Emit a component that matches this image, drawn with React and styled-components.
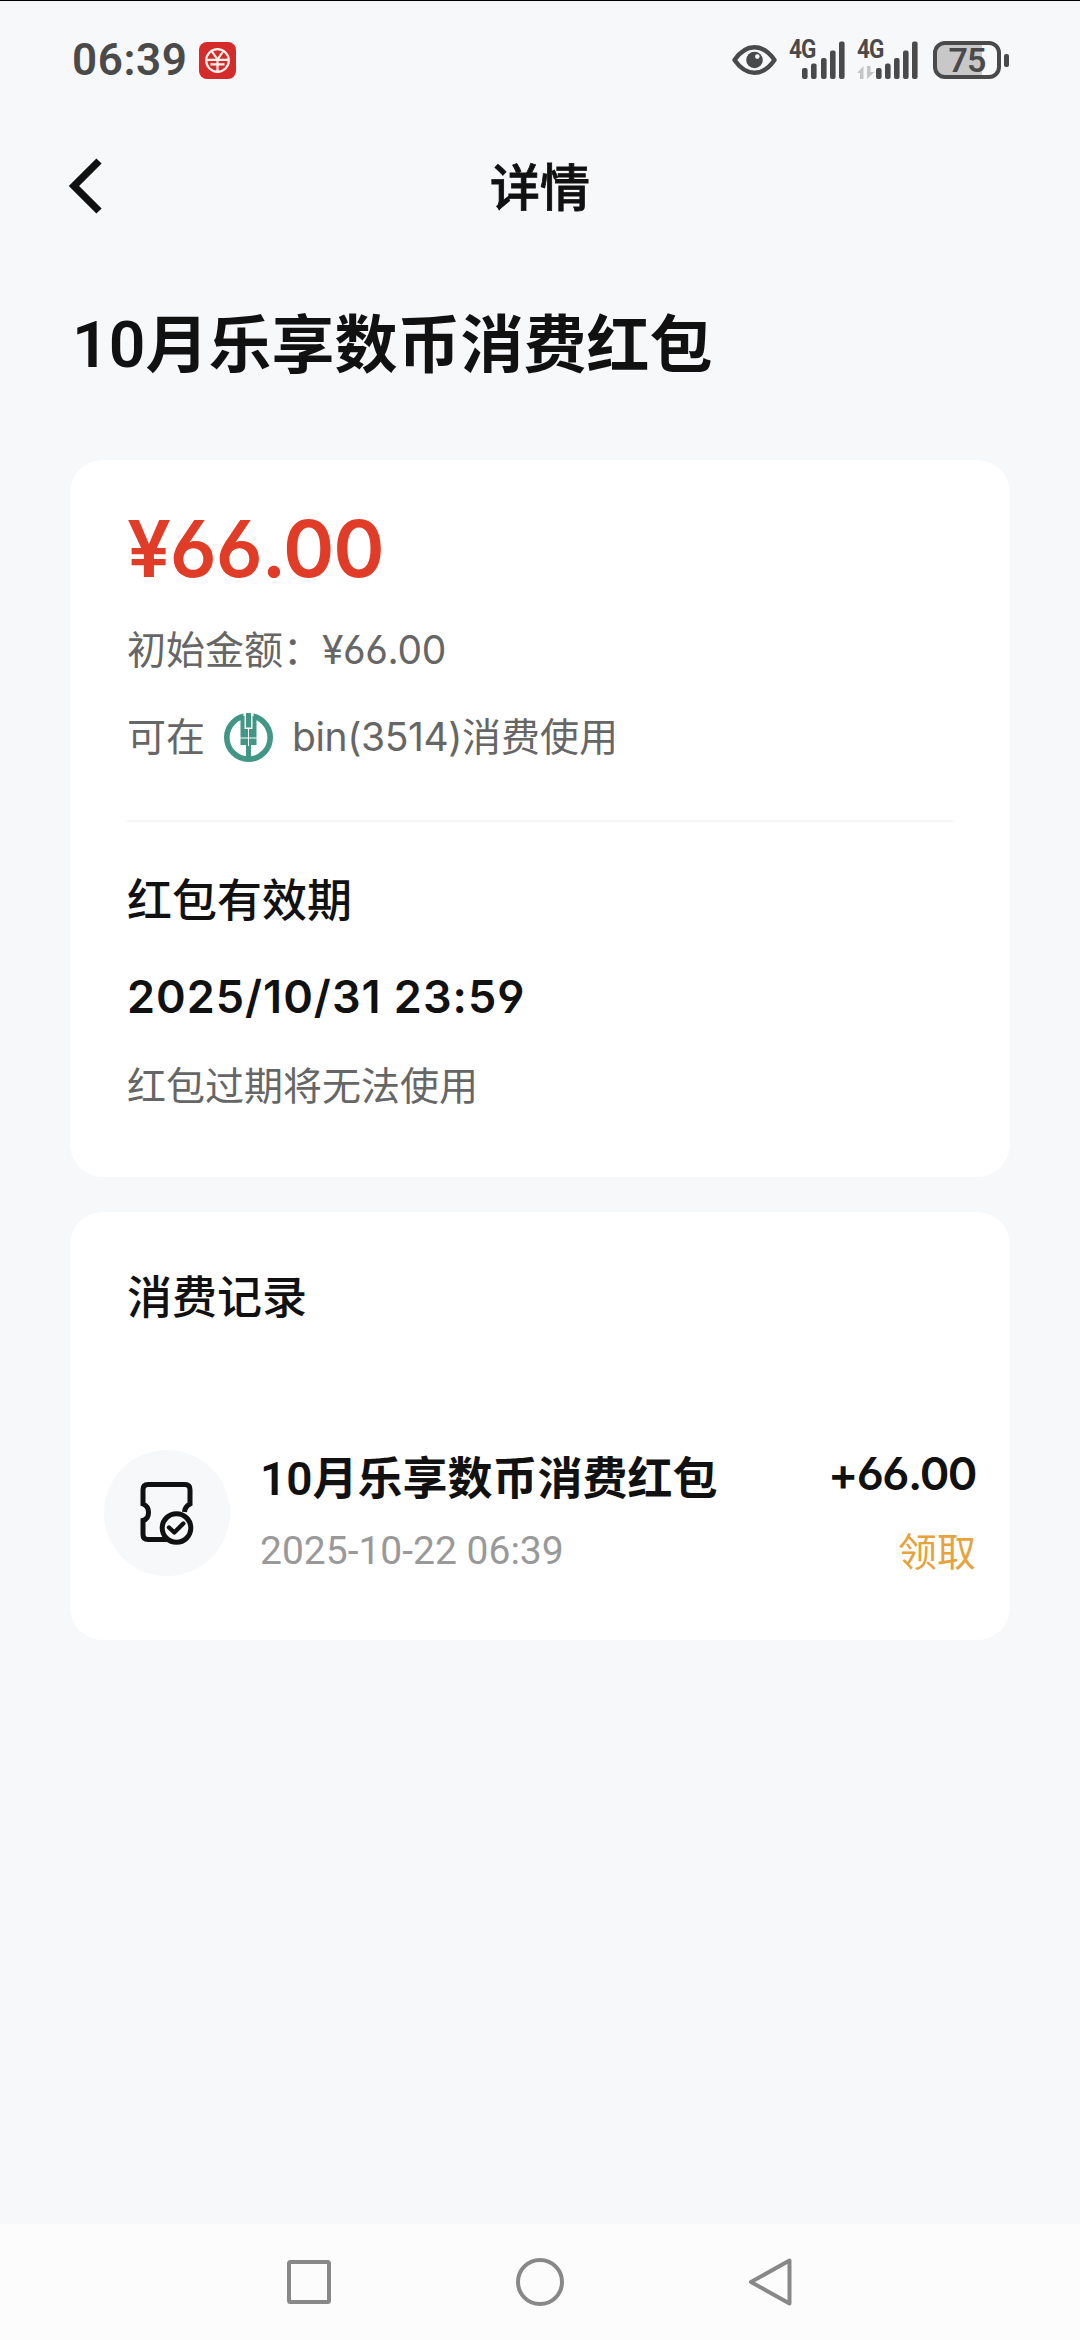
import React from "react";
import styled, { createGlobalStyle } from "styled-components";

const records = [
  {
    month: "10",
    title: "月乐享数币消费红包",
    time: "2025-10-22 06:39",
    amount: "+66.00",
    status: "领取",
  },
];

const SignalBars = ({ showData }) => (
  <svg width="62" height="38" viewBox="0 0 62 38">
    <g fill="#4a4a4a">
      <rect x={showData ? 19 : 13} y="27" width="5.6" height="11" rx="2" />
      <rect x={showData ? 28 : 22} y="22.5" width="5.6" height="15.5" rx="2" />
      <rect x={showData ? 37 : 32} y="17" width="5.6" height="21" rx="2" />
      <rect x={showData ? 46 : 41} y="9.5" width="5.6" height="28.5" rx="2" />
      <rect x={showData ? 55 : 50} y="0.5" width="5.6" height="37.5" rx="2" />
    </g>
    {showData && (
      <path
        d="M0 32l6.500-7v13H3v-6zM17.500 31L10 38V25h3.500v6z"
        fill="#c4c5c6"
      />
    )}
  </svg>
);

const Signal = ({ showData }) => (
  <SignalWrapper>
    <SignalBars showData={showData} />
    <SignalLabel>4G</SignalLabel>
  </SignalWrapper>
);

const WalletBadge = () => (
  <svg width="37" height="37" viewBox="0 0 37 37">
    <rect width="37" height="37" rx="8" fill="#d52b2b" />
    <g fill="none" stroke="#fff3ee" strokeWidth="2.2">
      <circle cx="18.5" cy="18.5" r="11.3" />
      <path d="M13 9.500l5.500 8 5.500-8M7 17.800h23M11.500 22.300h14M18.500 17v13" />
    </g>
  </svg>
);

const EyeIcon = () => (
  <svg width="45" height="30" viewBox="0 0 45 30">
    <path
      d="M2.500 15C8 7 14 2.300 22.500 2.300S37 7 42.500 15C37 23 31 27.700 22.500 27.700S8 23 2.500 15z"
      fill="none"
      stroke="#4a4a4a"
      strokeWidth="4.4"
      strokeLinejoin="round"
    />
    <circle cx="22.5" cy="15" r="8.3" fill="#4a4a4a" />
    <circle cx="25.3" cy="11.6" r="2.3" fill="#f7f8fa" />
  </svg>
);

const BackIcon = () => (
  <svg width="34" height="58" viewBox="0 0 34 58">
    <path
      d="M31 3L6 28l25 25"
      fill="none"
      stroke="#111"
      strokeWidth="7.4"
    />
  </svg>
);

const BankLogo = () => (
  <svg width="49" height="49" viewBox="0 0 49 49">
    <circle
      cx="24.5"
      cy="24.5"
      r="21.7"
      fill="none"
      stroke="#419685"
      strokeWidth="5.6"
    />
    <path d="M19.500 0h10v8h-10z" fill="#fff" />
    <path
      d="M22 0h5v14.500h-5zM16.500 3h4v13h8V3h4v29H27v14h-5V32h-5.500z"
      fill="#419685"
    />
    <path d="M24.500 16v17M16 25h17" stroke="#fff" strokeWidth="1" />
  </svg>
);

const CouponIcon = () => (
  <svg width="126" height="126" viewBox="0 0 126 126">
    <g fill="none" stroke="#111" strokeWidth="5">
      <path d="M64 89.500H44q-5 0-5-5V70.500q5.500-1.500 5.500-8T39 54V39.500q0-5 5-5h37q5 0 5 5V54q-5 2.500-5.500 8" />
      <circle cx="72.5" cy="78" r="14.3" />
      <path
        d="M65 77.500l5.300 5 9-9"
        strokeWidth="4.4"
        strokeLinecap="round"
        strokeLinejoin="round"
      />
    </g>
  </svg>
);

const RecordItem = ({ record }) => (
  <RecordRow>
    <RecordIcon>
      <CouponIcon />
    </RecordIcon>
    <RecordInfo>
      <RecordTitle>
        <TitleNumber>{record.month}</TitleNumber>
        {record.title}
      </RecordTitle>
      <RecordTime>{record.time}</RecordTime>
    </RecordInfo>
    <RecordResult>
      <RecordAmount>{record.amount}</RecordAmount>
      <RecordStatus>{record.status}</RecordStatus>
    </RecordResult>
  </RecordRow>
);

const App = () => {
  return (
    <Page>
      <GlobalStyle />
      <StatusBar>
        <Clock>06:39</Clock>
        <WalletBadge />
        <StatusIcons>
          <EyeIcon />
          <Signal />
          <Signal showData />
          <Battery>
            <BatteryBody>
              <BatteryText>75</BatteryText>
            </BatteryBody>
            <BatteryTip />
          </Battery>
        </StatusIcons>
      </StatusBar>
      <Header>
        <BackIcon />
        <HeaderTitle>详情</HeaderTitle>
      </Header>
      <PageTitle>
        <TitleNumber>10</TitleNumber>月乐享数币消费红包
      </PageTitle>
      <AmountCard>
        <Amount>¥66.00</Amount>
        <InitialAmount>
          初始金额：<InlineNumber>¥66.00</InlineNumber>
        </InitialAmount>
        <UsageRow>
          可在
          <BankLogo />
          <span>
            <InlineNumber>bin(3514)</InlineNumber>消费使用
          </span>
        </UsageRow>
        <Divider />
        <SectionTitle>红包有效期</SectionTitle>
        <ExpireTime>2025/10/31 23:59</ExpireTime>
        <ExpireTip>红包过期将无法使用</ExpireTip>
      </AmountCard>
      <RecordCard>
        <SectionTitle>消费记录</SectionTitle>
        {records.map((record) => (
          <RecordItem key={record.time} record={record} />
        ))}
      </RecordCard>
      <NavBar>
        <svg width="48" height="48" viewBox="0 0 48 48">
          <rect x="4" y="4" width="40" height="40" rx="1.5" />
        </svg>
        <svg width="48" height="48" viewBox="0 0 48 48">
          <circle cx="24" cy="24" r="22" />
        </svg>
        <svg width="48" height="48" viewBox="0 0 48 48">
          <path d="M42.500 2.500v43L4 24z" strokeLinejoin="round" />
        </svg>
      </NavBar>
    </Page>
  );
};

const GlobalStyle = createGlobalStyle`
  * {
    box-sizing: border-box;
  }
  body {
    margin: 0;
    background: #f7f8fa;
    font-family: Inter, "Noto Sans CJK SC", sans-serif;
    font-feature-settings: "cv03", "cv04";
    color: #111;
  }
  svg {
    display: block;
    flex-shrink: 0;
  }
`;

const Page = styled.div`
  display: flex;
  flex-direction: column;
  width: 1080px;
  height: 2340px;
  border-top: 1px solid #000;
  background: #f7f8fa;
`;

const StatusBar = styled.div`
  display: flex;
  align-items: center;
  height: 119px;
  padding: 0 71px 1px 72px;
`;

const Clock = styled.div`
  width: 127px;
  font-family: Roboto, sans-serif;
  font-size: 44px;
  line-height: 50px;
  font-weight: 600;
  letter-spacing: 0.6px;
  color: #4a4a4a;
  white-space: nowrap;
`;

const StatusIcons = styled.div`
  display: flex;
  align-items: center;
  margin-left: auto;
`;

const SignalWrapper = styled.div`
  position: relative;
  margin-left: 12px;
  & + & {
    margin-left: 6px;
  }
`;

const SignalLabel = styled.div`
  position: absolute;
  top: -4px;
  left: 0;
  font-family: Roboto, sans-serif;
  font-size: 25px;
  line-height: 26px;
  font-weight: 700;
  letter-spacing: -1px;
  color: #4a4a4a;
  transform: scaleX(0.9);
  transform-origin: left;
`;

const Battery = styled.div`
  display: flex;
  align-items: center;
  margin-left: 14px;
`;

const BatteryBody = styled.div`
  display: flex;
  align-items: center;
  justify-content: center;
  width: 68px;
  height: 38px;
  border: 4px solid #4a4a4a;
  border-radius: 12px;
  background: linear-gradient(90deg, #c8c8c9 75%, #f7f8fa 75%);
`;

const BatteryText = styled.div`
  font-family: Roboto, sans-serif;
  font-size: 34px;
  line-height: 30px;
  font-weight: 600;
  letter-spacing: -1px;
  color: #4a4a4a;
`;

const BatteryTip = styled.div`
  width: 5px;
  height: 13px;
  margin-left: 3px;
  border-radius: 2px;
  background: #4a4a4a;
`;

const Header = styled.div`
  display: grid;
  grid-template-columns: 1fr auto 1fr;
  align-items: center;
  height: 134px;
  padding: 0 68px;
`;

const HeaderTitle = styled.div`
  padding-top: 2px;
  font-size: 50px;
  line-height: 70px;
  font-weight: 500;
  -webkit-text-stroke: 0.8px #111;
`;

const TitleNumber = styled.span`
  font-family: Roboto, sans-serif;
  font-size: 1.02em;
  font-weight: 600;
`;

const PageTitle = styled.div`
  padding: 45px 72px 0;
  height: 206px;
  font-size: 63px;
  line-height: 90px;
  font-weight: 700;
`;

const Card = styled.div`
  display: flex;
  flex-direction: column;
  margin: 0 70px;
  border-radius: 33px;
  background: #fff;
`;

const AmountCard = styled(Card)`
  height: 717px;
  padding: 44px 57px 0;
`;

const Amount = styled.div`
  font-size: 78px;
  line-height: 90px;
  font-weight: 600;
  letter-spacing: -1.2px;
  color: #e03c28;
`;

const InitialAmount = styled.div`
  margin-top: 26px;
  font-size: 39px;
  line-height: 60px;
  color: #666;
`;

const UsageRow = styled.div`
  display: flex;
  align-items: center;
  gap: 19px;
  margin-top: 27px;
  font-size: 39px;
  line-height: 60px;
  color: #666;
`;

const InlineNumber = styled.span`
  letter-spacing: -0.4px;
`;

const Divider = styled.div`
  height: 2px;
  margin: 53px 0 49px;
  background: #f4f4f4;
`;

const SectionTitle = styled.div`
  font-size: 45px;
  line-height: 60px;
  font-weight: 500;
`;

const ExpireTime = styled.div`
  margin-top: 36px;
  font-size: 45px;
  line-height: 60px;
  font-weight: 600;
  letter-spacing: 1px;
`;

const ExpireTip = styled.div`
  margin-top: 29px;
  font-size: 39px;
  line-height: 60px;
  color: #666;
`;

const RecordCard = styled(Card)`
  height: 428px;
  margin-top: 35px;
  padding: 56px 34px 0 34px;
  ${SectionTitle} {
    margin-left: 23px;
  }
`;

const RecordRow = styled.div`
  display: flex;
  height: 126px;
  margin-top: 122px;
`;

const RecordIcon = styled.div`
  width: 126px;
  height: 126px;
  border-radius: 50%;
  background: #f7f8fa;
`;

const RecordInfo = styled.div`
  flex: 1;
  margin-left: 30px;
`;

const RecordTitle = styled.div`
  padding-top: 1px;
  font-size: 45px;
  line-height: 56px;
  font-weight: 700;
`;

const RecordTime = styled.div`
  margin-top: 16px;
  font-family: Roboto, sans-serif;
  font-size: 39px;
  line-height: 56px;
  color: #999;
`;

const RecordResult = styled.div`
  text-align: right;
`;

const RecordAmount = styled.div`
  margin-top: -4px;
  font-size: 45px;
  line-height: 56px;
  font-weight: 600;
  letter-spacing: -1.5px;
`;

const RecordStatus = styled.div`
  margin-top: 22px;
  font-size: 39px;
  line-height: 56px;
  color: #e6a23c;
`;

const NavBar = styled.div`
  display: flex;
  justify-content: center;
  align-items: center;
  gap: 183px;
  height: 116px;
  margin-top: auto;
  background: #fcfcfc;
  svg {
    fill: none;
    stroke: #888;
    stroke-width: 4px;
  }
`;

export default App;
